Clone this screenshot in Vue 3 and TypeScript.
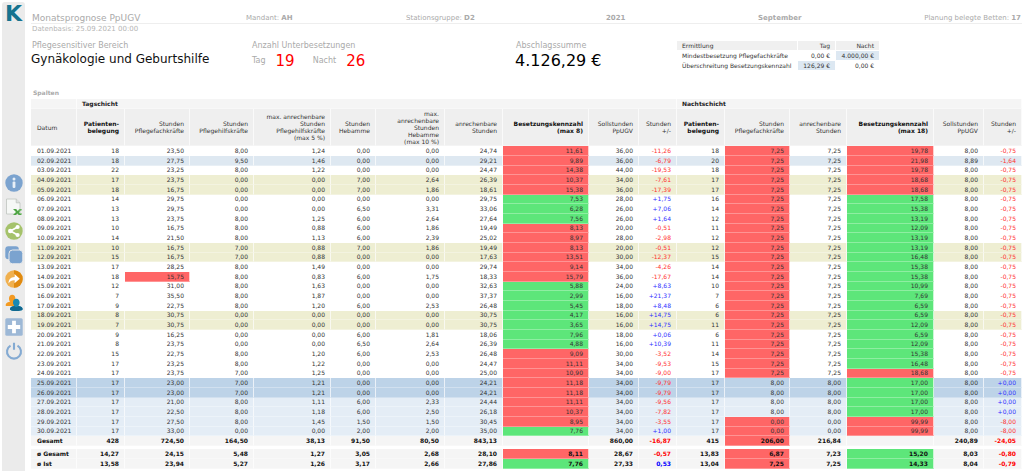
<script setup lang="ts">
type Tone = 'plain' | 'marked' | 'weekend' | 'forecastWeekend' | 'forecast'

interface DayRow {
  label: string
  cells: string[]
  tone: Tone
}

interface Column {
  width: number
  lines: string[]
  strong?: boolean
}

const columns: Column[] = [
  { width: 46, lines: ['Datum'] },
  { width: 48, lines: ['Patienten-', 'belegung'], strong: true },
  { width: 65, lines: ['Stunden', 'Pflegefachkräfte'] },
  { width: 64, lines: ['Stunden', 'Pflegehilfskräfte'] },
  { width: 77, lines: ['max. anrechenbare', 'Stunden', 'Pflegehilfskräfte', '(max 5 %)'] },
  { width: 45, lines: ['Stunden', 'Hebamme'] },
  { width: 69, lines: ['max.', 'anrechenbare', 'Stunden', 'Hebamme', '(max 10 %)'] },
  { width: 58, lines: ['anrechenbare', 'Stunden'] },
  { width: 86, lines: ['Besetzungskennzahl', '(max 8)'], strong: true },
  { width: 50, lines: ['Sollstunden', 'PpUGV'] },
  { width: 38, lines: ['Stunden', '+/-'] },
  { width: 48, lines: ['Patienten-', 'belegung'], strong: true },
  { width: 65, lines: ['Stunden', 'Pflegefachkräfte'] },
  { width: 57, lines: ['anrechenbare', 'Stunden'] },
  { width: 87, lines: ['Besetzungskennzahl', '(max 18)'], strong: true },
  { width: 50, lines: ['Sollstunden', 'PpUGV'] },
  { width: 38, lines: ['Stunden', '+/-'] },
]

const dayData = `
18 23,50 8,00 1,24 0,00 0,00 24,74 11,61 36,00 -11,26 18 7,25 7,25 19,78 8,00 -0,75
18 27,75 9,50 1,46 0,00 0,00 29,21 9,89 36,00 -6,79 20 7,25 7,25 21,98 8,89 -1,64
22 23,25 8,00 1,22 0,00 0,00 24,47 14,38 44,00 -19,53 18 7,25 7,25 19,78 8,00 -0,75
17 23,75 0,00 0,00 7,00 2,64 26,39 10,37 34,00 -7,61 17 7,25 7,25 18,68 8,00 -0,75
18 16,75 0,00 0,00 7,00 1,86 18,61 15,38 36,00 -17,39 17 7,25 7,25 18,68 8,00 -0,75
14 29,75 0,00 0,00 0,00 0,00 29,75 7,53 28,00 +1,75 16 7,25 7,25 17,58 8,00 -0,75
13 29,75 0,00 0,00 6,50 3,31 33,06 6,28 26,00 +7,06 14 7,25 7,25 15,38 8,00 -0,75
13 23,75 8,00 1,25 6,00 2,64 27,64 7,56 26,00 +1,64 12 7,25 7,25 13,19 8,00 -0,75
10 16,75 8,00 0,88 6,00 1,86 19,49 8,13 20,00 -0,51 11 7,25 7,25 12,09 8,00 -0,75
14 21,50 8,00 1,13 6,00 2,39 25,02 8,97 28,00 -2,98 12 7,25 7,25 13,19 8,00 -0,75
10 16,75 7,00 0,88 7,00 1,86 19,49 8,13 20,00 -0,51 12 7,25 7,25 13,19 8,00 -0,75
15 16,75 7,00 0,88 0,00 0,00 17,63 13,51 30,00 -12,37 15 7,25 7,25 16,48 8,00 -0,75
17 28,25 8,00 1,49 0,00 0,00 29,74 9,14 34,00 -4,26 14 7,25 7,25 15,38 8,00 -0,75
18 15,75 8,00 0,83 6,00 1,75 18,33 15,79 36,00 -17,67 14 7,25 7,25 15,38 8,00 -0,75
12 31,00 8,00 1,63 0,00 0,00 32,63 5,88 24,00 +8,63 10 7,25 7,25 10,99 8,00 -0,75
7 35,50 8,00 1,87 0,00 0,00 37,37 2,99 16,00 +21,37 7 7,25 7,25 7,69 8,00 -0,75
9 22,75 8,00 1,20 6,00 2,53 26,48 5,45 18,00 +8,48 6 7,25 7,25 6,59 8,00 -0,75
8 30,75 0,00 0,00 0,00 0,00 30,75 4,17 16,00 +14,75 6 7,25 7,25 6,59 8,00 -0,75
7 30,75 0,00 0,00 0,00 0,00 30,75 3,65 16,00 +14,75 11 7,25 7,25 12,09 8,00 -0,75
9 16,25 0,00 0,00 6,00 1,81 18,06 7,96 18,00 +0,06 6 7,25 7,25 6,59 8,00 -0,75
8 23,75 0,00 0,00 6,50 2,64 26,39 4,88 16,00 +10,39 11 7,25 7,25 12,09 8,00 -0,75
15 22,75 8,00 1,20 6,00 2,53 26,48 9,09 30,00 -3,52 14 7,25 7,25 15,38 8,00 -0,75
17 23,25 8,00 1,22 0,00 0,00 24,47 11,11 34,00 -9,53 15 7,25 7,25 16,48 8,00 -0,75
17 23,75 7,00 1,25 0,00 0,00 25,00 10,90 34,00 -9,00 17 7,25 7,25 18,68 8,00 -0,75
17 23,00 7,00 1,21 0,00 0,00 24,21 11,18 34,00 -9,79 17 8,00 8,00 17,00 8,00 +0,00
17 23,00 7,00 1,21 0,00 0,00 24,21 11,18 34,00 -9,79 17 8,00 8,00 17,00 8,00 +0,00
17 21,00 8,00 1,11 6,00 2,33 24,44 11,11 34,00 -9,56 17 8,00 8,00 17,00 8,00 +0,00
17 22,50 8,00 1,18 6,00 2,50 26,18 10,37 34,00 -7,82 17 8,00 8,00 17,00 8,00 +0,00
17 27,50 8,00 1,45 1,50 1,50 30,45 8,95 34,00 -3,55 17 0,00 0,00 99,99 8,00 -8,00
17 33,00 0,00 0,00 2,00 2,00 35,00 7,76 34,00 +1,00 17 0,00 0,00 99,99 8,00 -8,00`

function toneOf(day: number): Tone {
  if (day === 2) return 'marked'
  if ([4, 5, 11, 12, 18, 19].includes(day)) return 'weekend'
  if (day === 25 || day === 26) return 'forecastWeekend'
  return day > 26 ? 'forecast' : 'plain'
}

const days: DayRow[] = dayData.trim().split('\n').map((line, i) => ({
  label: `${String(i + 1).padStart(2, '0')}.09.2021`,
  cells: line.split(' '),
  tone: toneOf(i + 1),
}))

const total = '428 724,50 164,50 38,13 91,50 80,50 843,13 _ 860,00 -16,87 415 206,00 216,84 _ 240,89 -24,05'
  .split(' ').map((v) => (v === '_' ? '' : v))

const averages = [
  { label: 'ø Gesamt', cells: '14,27 24,15 5,48 1,27 3,05 2,68 28,10 8,11 28,67 -0,57 13,83 6,87 7,23 15,20 8,03 -0,80'.split(' ') },
  { label: 'ø Ist', cells: '13,58 23,94 5,27 1,26 3,17 2,66 27,86 7,76 27,33 0,53 13,04 7,25 7,25 14,33 8,04 -0,79'.split(' ') },
]

const num = (v: string): number => Number(v.replace(',', '.'))

/* Index 1, 11: specialist hours; 7, 13: occupancy ratio; 9, 15: deviation. */
function cellClass(i: number, v: string): string {
  if (v === '') return ''
  if (i === 1) return num(v) < 16 ? 'bad' : ''
  if (i === 11) return v === '206,00' || num(v) < 8 ? 'bad' : ''
  if (i === 7) return num(v) > 8 ? 'bad' : 'good'
  if (i === 13) return num(v) > 18 ? 'bad' : 'good'
  if (i === 9 || i === 15) return v.startsWith('-') ? 'minus' : 'plus'
  return ''
}
</script>

<template>
  <div class="page">
    <nav class="rail" aria-label="Werkzeuge">
      <div class="logo">K</div>
      <button type="button" aria-label="Info">
        <svg viewBox="0 0 18 18"><circle cx="9" cy="9" r="8.7" fill="#7ba3cf" /><circle cx="9" cy="4.9" r="1.5" fill="#e8eff7" /><rect x="7.6" y="7.4" width="2.8" height="6.6" rx="1" fill="#e8eff7" /></svg>
      </button>
      <button type="button" aria-label="Excel-Export">
        <svg viewBox="0 0 18 18"><path d="M1.5 1h9.7L15 4.800V16H1.500z" fill="#f6f8f6" stroke="#bfc4bf" stroke-width=".8" /><path d="M11.200 1v3.800H15" fill="#dfe3df" stroke="#bfc4bf" stroke-width=".8" /><path d="M8 11h3.200l1.500 2 2-2H17l-3 3.300L17 17h-3.300l-1.300-1.500L11 17H8l3-3z" fill="#4fa544" /><path d="M13.500 12h3.500M14.500 15.600h2.500" stroke="#8bc783" stroke-width=".8" /></svg>
      </button>
      <button type="button" aria-label="Teilen">
        <svg viewBox="0 0 18 18"><circle cx="9" cy="9" r="8.700" fill="#a5c26b" /><path d="M12.600 5 5.500 9l7.100 4" fill="none" stroke="#fff" stroke-width="1.700" /><circle cx="12.600" cy="5" r="2.100" fill="#fff" /><circle cx="5.300" cy="9" r="2.300" fill="#fff" /><circle cx="12.600" cy="13" r="2.100" fill="#fff" /></svg>
      </button>
      <button type="button" aria-label="Kopieren">
        <svg viewBox="0 0 18 18"><rect x=".3" y=".3" width="13.500" height="13" rx="3" fill="#7ba3cf" /><rect x="4" y="4" width="13.800" height="13.800" rx="3.500" fill="#7ba3cf" stroke="#ebebeb" stroke-width="1" /></svg>
      </button>
      <button type="button" aria-label="Weiterleiten">
        <svg viewBox="0 0 18 18"><circle cx="9" cy="9" r="8.700" fill="#f0b04e" /><path d="M9 .3a8.700 8.700 0 0 1 0 17.400z" fill="#e08a10" /><path d="M3.500 13.500c.2-4.500 2.300-6.500 6-6.600V4l5.300 4.700-5.300 4.600v-3C7 10.200 5 11 3.500 13.500z" fill="#fff" /></svg>
      </button>
      <button type="button" aria-label="Benutzer">
        <svg viewBox="0 0 18 18"><path d="M4 4.500C4 2 5.300.7 7.200.7s3.200 1.500 3.200 3.800c0 1.600-.7 2.700-1.200 3.500L11 12H.8c-.6-2.400.8-3.500 4.300-4.200C4.500 7 4 6 4 4.500z" fill="#f39a22" /><path d="M8 8.600C8 6 9.300 4.800 11.300 4.800s3.300 1.400 3.300 3.700c0 1.600-.6 2.600-1.200 3.400 3.300.5 4.400 1.700 4.200 3.600-1.200 1.800-10.800 2.200-12.600 0-.2-2 .8-3 4.200-3.600C8.500 11 8 10 8 8.600z" fill="#1889b4" /><path d="M5 15.500c0-2 1-3 4.200-3.600 1.300 1.500 2.900 1.500 4.200 0 3.300.5 4.400 1.700 4.200 3.600-1.200 1.800-10.800 2.200-12.600 0z" fill="#11688f" /></svg>
      </button>
      <button type="button" aria-label="Hinzufügen">
        <svg viewBox="0 0 18 18"><rect x=".3" y=".3" width="17.400" height="17.400" rx="1.500" fill="#9db8d6" /><path d="M9 2.800v12.400M2.800 9h12.400" stroke="#fff" stroke-width="3.800" /></svg>
      </button>
      <button type="button" aria-label="Abmelden">
        <svg viewBox="0 0 18 18"><path d="M5.500 3.600a7 7 0 1 0 7 0M9 .8v7" fill="none" stroke="#84aad2" stroke-width="2.100" /></svg>
      </button>
    </nav>

    <main>
      <header class="meta">
        <h1>Monatsprognose PpUGV</h1>
        <span>Mandant: <b>AH</b></span>
        <span>Stationsgruppe: <b>D2</b></span>
        <b>2021</b>
        <b>September</b>
        <span class="end">Planung belegte Betten: <b>17</b></span>
      </header>
      <p class="basis">Datenbasis: 25.09.2021 00:00</p>

      <section class="figures">
        <div>
          <p class="caption">Pflegesensitiver Bereich</p>
          <p class="area">Gynäkologie und Geburtshilfe</p>
        </div>
        <div>
          <p class="caption">Anzahl Unterbesetzungen</p>
          <p class="shorts">
            <span class="caption">Tag</span><strong>19</strong>
            <span class="caption night">Nacht</span><strong>26</strong>
          </p>
        </div>
        <div>
          <p class="caption">Abschlagssumme</p>
          <p class="sum">4.126,29 €</p>
        </div>
        <table class="calc">
          <colgroup>
            <col class="calc-name" />
            <col class="calc-day" />
            <col />
          </colgroup>
          <thead>
            <tr><th>Ermittlung</th><th>Tag</th><th>Nacht</th></tr>
          </thead>
          <tbody>
            <tr><td>Mindestbesetzung Pflegefachkräfte</td><td>0,00 €</td><td class="hit">4.000,00 €</td></tr>
            <tr><td>Überschreitung Besetzungskennzahl</td><td class="hit">126,29 €</td><td>0,00 €</td></tr>
          </tbody>
        </table>
      </section>

      <button type="button" class="columns">Spalten</button>

      <table class="grid">
        <colgroup>
          <col v-for="(c, i) in columns" :key="i" :style="{ width: (c.width / 991) * 100 + '%' }" />
        </colgroup>
        <thead>
          <tr class="group">
            <th></th>
            <th colspan="10">Tagschicht</th>
            <th colspan="6">Nachtschicht</th>
          </tr>
          <tr class="heads">
            <th v-for="(c, i) in columns" :key="i" :class="{ strong: c.strong }">
              <span v-for="l in c.lines" :key="l">{{ l }}</span>
            </th>
          </tr>
        </thead>
        <tbody class="days">
          <tr v-for="d in days" :key="d.label" :class="d.tone">
            <td>{{ d.label }}</td>
            <td v-for="(v, i) in d.cells" :key="i" :class="cellClass(i, v)">{{ v }}</td>
          </tr>
        </tbody>
        <tbody class="sums">
          <tr>
            <td>Gesamt</td>
            <td v-for="(v, i) in total" :key="i" :class="cellClass(i, v)">{{ v }}</td>
          </tr>
          <tr class="gap"><td colspan="17"></td></tr>
          <tr v-for="a in averages" :key="a.label">
            <td>{{ a.label }}</td>
            <td v-for="(v, i) in a.cells" :key="i" :class="cellClass(i, v)">{{ v }}</td>
          </tr>
        </tbody>
      </table>
    </main>
  </div>
</template>

<style>
body {
  margin: 0;
  background: #fff;
}
</style>

<style scoped>
.page {
  display: flex;
  box-sizing: border-box;
  min-height: 100vh;
  padding: 2px 2px 0;
  font-family: "DejaVu Sans", Verdana, sans-serif;
  font-size: 6px;
  color: #333;
}

.rail {
  display: flex;
  flex: 0 0 23px;
  flex-direction: column;
  align-items: center;
  gap: 6px;
  border-radius: 3px 3px 0 0;
  background: #ebebeb;
}

.logo {
  height: 166px;
  font: 700 22px/24px "DejaVu Sans", sans-serif;
  color: #16738f;
}

.rail button {
  display: block;
  width: 18px;
  height: 18px;
  padding: 0;
  border: 0;
  background: none;
}

.rail svg {
  display: block;
  width: 18px;
  height: 18px;
}

main {
  flex: 1;
  min-width: 0;
  padding: 11px 0 0 6px;
}

p,
h1 {
  margin: 0;
  font-weight: 400;
}

.meta {
  display: grid;
  grid-template-columns: 214fr 160fr 200fr 152fr 132fr 131fr;
  padding: 0 1px;
  border-bottom: 1px solid #eee;
  font-size: 7px;
  line-height: 10px;
  white-space: nowrap;
  color: #aaa;
}

.meta h1 {
  font-size: 9px;
}

.end {
  text-align: right;
}

.basis {
  padding-left: 1px;
  font-size: 7px;
  line-height: 10px;
  color: #b5b5b5;
}

.figures {
  display: grid;
  grid-template-columns: 220fr 264fr 162fr 345fr;
  align-items: start;
  margin-top: 7px;
}

.caption {
  padding-left: 1px;
  font-size: 8px;
  line-height: 10px;
  color: #aaa;
}

.area {
  font-size: 12px;
  line-height: 16px;
  color: #111;
}

.shorts {
  display: flex;
  align-items: center;
  line-height: 20px;
}

.shorts strong {
  margin-left: 10px;
  font-size: 15px;
  font-weight: 400;
  color: #f00;
}

.shorts .night {
  margin-left: 17px;
}

.sum {
  font-size: 16px;
  line-height: 20px;
  color: #000;
}

.calc {
  width: 203px;
  table-layout: fixed;
  border-spacing: 0;
  line-height: 9px;
  white-space: nowrap;
}

.calc-name {
  width: 121px;
}

.calc-day {
  width: 38px;
}

.calc th,
.calc td {
  padding: 0 5px 0 0;
  border-right: 1px solid #fff;
  border-bottom: 1px solid #fff;
  font-weight: 400;
  text-align: right;
}

.calc th {
  background: #f0f0f0;
}

.calc th:first-child,
.calc td:first-child {
  padding: 0 0 0 5px;
  text-align: left;
}

.calc .hit {
  background: #dde8f2;
}

.columns {
  display: block;
  margin: 17px 0 1px;
  padding: 0 2px;
  border: 0;
  background: none;
  font: 700 6px/10px "DejaVu Sans", Verdana, sans-serif;
  color: #aaa;
}

.grid {
  width: 100%;
  table-layout: fixed;
  border-spacing: 0;
  line-height: 8px;
}

.grid th,
.grid td {
  box-sizing: border-box;
  padding: 0 5px 0 0;
  border-right: 1px solid rgba(255, 255, 255, 0.7);
  border-bottom: 1px solid rgba(255, 255, 255, 0.3);
  text-align: right;
  white-space: nowrap;
}

.grid td:first-child,
.heads th:first-child {
  padding-left: 6px;
  text-align: left;
}

.group {
  height: 10px;
}

.grid .group th {
  padding-left: 5px;
  background: #f5f5f5;
  text-align: left;
  color: #222;
}

.heads {
  height: 37px;
}

.heads th {
  background: #efefef;
  font-weight: 400;
  line-height: 7px;
}

.heads .strong {
  font-weight: 700;
  color: #111;
}

.heads span {
  display: block;
}

.days tr {
  height: 10px;
}

.days tr:nth-child(3n) {
  height: 9px;
}

.marked {
  background: #dee8f1;
}

.weekend {
  background: #eeeed2;
}

.forecastWeekend {
  background: #bdd3e8;
}

.forecast {
  background: #e4edf6;
}

.grid .bad {
  background: #ff6666;
}

.grid .good {
  background: #5de67a;
}

.minus {
  color: #ff3030;
}

.plus {
  color: #3030ff;
}

.sums tr {
  height: 10px;
  background: #f5f5f5;
  font-weight: 700;
  color: #111;
}

.sums .minus {
  color: #f00;
}

.sums .plus {
  color: #00f;
}

.sums .gap {
  height: 3px;
  background: #fff;
  line-height: 0;
}

.sums .gap td {
  padding: 0;
  border: 0;
}
</style>
